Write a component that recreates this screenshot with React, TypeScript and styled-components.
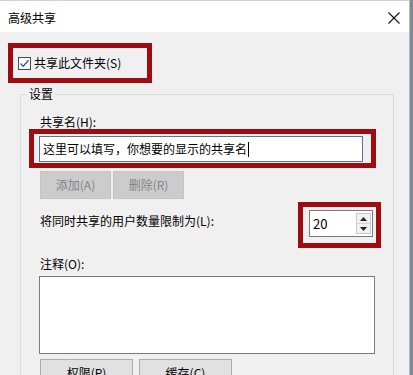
import React from "react";
import styled, { createGlobalStyle } from "styled-components";

const Global = createGlobalStyle`
  html, body { margin: 0; padding: 0; background: #f0f0f0; }
  body { font-family: "Noto Sans CJK SC", "Liberation Sans", sans-serif; font-size: 12px; color: #000; }
  * { box-sizing: border-box; }
`;

const Page = styled.div`
  display: flex;
  width: 413px;
  height: 375px;
  overflow: hidden;
`;

const Dialog = styled.div`
  flex: 1;
  display: flex;
  flex-direction: column;
  background: #f0f0f0;
  border-top: 1px solid #d2d2d2;
  border-right: 1px solid #b8bcc4;
`;

const Strip = styled.div`
  width: 3px;
  background: #808898;
`;

const TitleBar = styled.div`
  flex: none;
  height: 31px;
  background: #fff;
  display: flex;
  align-items: center;
  justify-content: space-between;
  padding: 0 9px 0 8px;
`;

const Title = styled.span`
  font-size: 12px;
  line-height: 14px;
  margin-top: 2px;
`;

const CloseIcon = styled.svg`
  width: 12px;
  height: 12px;
  margin-top: 2px;
`;

const Body = styled.div`
  flex: 1 0 auto;
  display: flex;
  flex-direction: column;
  align-items: flex-start;
  padding: 11px 0 0 8px;
`;

const Highlight = styled.div<{ $pad: string; $ml?: number; $mr?: number }>`
  flex: none;
  display: flex;
  align-items: center;
  border: 5px solid #9c0c10;
  padding: ${(p) => p.$pad};
  margin-left: ${(p) => p.$ml ?? 0}px;
  margin-right: ${(p) => p.$mr ?? 0}px;
`;

const CheckRow = styled.label`
  display: flex;
  align-items: center;
  gap: 3px;
  width: 134px;
  height: 30px;
  padding-left: 5px;
  line-height: 14px;
`;

const CheckBox = styled.span`
  width: 13px;
  height: 13px;
  border: 1px solid #4a4a4a;
  background: #fff;
  display: inline-flex;
  align-items: center;
  justify-content: center;
`;

const Group = styled.div`
  margin: 11px 0 0 12px;
  width: 374px;
  border: 1px solid #dcdcdc;
  border-bottom: none;
  padding: 0 17px 0 19px;
  display: flex;
  flex-direction: column;
  align-items: stretch;
  flex: 1 0 auto;
`;

const GroupLabel = styled.span`
  align-self: flex-start;
  margin: -9px 0 0 -13px;
  padding: 0 2px;
  background: #f0f0f0;
  line-height: 16px;
`;

const FieldLabel = styled.div<{ $mt: number }>`
  flex: none;
  line-height: 14px;
  margin-top: ${(p) => p.$mt}px;
`;

const TextInput = styled.div`
  width: 336px;
  height: 26px;
  border: 1px solid #5f7386;
  background: #fff;
  display: flex;
  align-items: center;
  padding-left: 3px;
  line-height: 14px;
`;

const Caret = styled.span`
  display: inline-block;
  width: 1px;
  height: 15px;
  background: #000;
  margin-left: 1px;
`;

const ButtonRow = styled.div<{ $gap: number; $mt: number }>`
  flex: none;
  display: flex;
  gap: ${(p) => p.$gap}px;
  margin-top: ${(p) => p.$mt}px;
`;

const Button = styled.button<{ $disabled?: boolean; $w: number; $h: number }>`
  flex: none;
  width: ${(p) => p.$w}px;
  height: ${(p) => p.$h}px;
  font-family: inherit;
  font-size: 12px;
  line-height: 14px;
  padding: 0;
  color: ${(p) => (p.$disabled ? "#838383" : "#000")};
  background: ${(p) => (p.$disabled ? "#cccccc" : "#e1e1e1")};
  border: 1px solid ${(p) => (p.$disabled ? "#c4c4c4" : "#adadad")};
`;

const LimitRow = styled.div`
  flex: none;
  display: flex;
  justify-content: space-between;
  align-items: flex-start;
  margin-top: 3px;
`;

const LimitLabel = styled.span`
  line-height: 14px;
  margin-top: 12px;
`;

const Spin = styled.div`
  width: 64px;
  height: 27px;
  border: 1px solid #7a7a7a;
  background: #fff;
  display: flex;
  align-items: center;
  justify-content: space-between;
  padding: 0 1px 0 3px;
`;

const SpinValue = styled.span`
  font-size: 13px;
  line-height: 14px;
`;

const SpinButtons = styled.div`
  width: 15px;
  height: 21px;
  display: flex;
  flex-direction: column;
  border: 1px solid #c9c9c9;
  background: #f2f2f2;
`;

const SpinHalf = styled.div<{ $top?: boolean }>`
  flex: 1;
  display: flex;
  align-items: center;
  justify-content: center;
  border-bottom: ${(p) => (p.$top ? "1px solid #d4d4d4" : "none")};
`;

const TextArea = styled.div`
  flex: none;
  width: 336px;
  height: 78px;
  margin: 5px 0 0 -1px;
  border: 1px solid #7a7a7a;
  background: #fff;
`;

export default function App() {
  return (
    <>
      <Global />
      <Page>
        <Dialog>
          <TitleBar>
            <Title>高级共享</Title>
            <CloseIcon viewBox="0 0 12 12">
              <path d="M0.5 0.5 L11.5 11.5 M11.5 0.5 L0.5 11.5" stroke="#111" strokeWidth="1.1" fill="none" />
            </CloseIcon>
          </TitleBar>
          <Body>
            <Highlight $pad="0">
              <CheckRow>
                <CheckBox>
                  <svg width="11" height="11" viewBox="0 0 11 11">
                    <path d="M1.5 5.5 L4.2 8.3 L9.5 2.2" stroke="#2b5f97" strokeWidth="1.3" fill="none" />
                  </svg>
                </CheckBox>
                共享此文件夹(S)
              </CheckRow>
            </Highlight>
            <Group>
              <GroupLabel>设置</GroupLabel>
              <FieldLabel $mt={13}>共享名(H):</FieldLabel>
              <Highlight $pad="2px 8px 1px 5px" $ml={-11}>
                <TextInput>
                  这里可以填写，你想要的显示的共享名
                  <Caret />
                </TextInput>
              </Highlight>
              <ButtonRow $gap={2} $mt={3}>
                <Button $disabled $w={71} $h={28}>添加(A)</Button>
                <Button $disabled $w={71} $h={28}>删除(R)</Button>
              </ButtonRow>
              <LimitRow>
                <LimitLabel>将同时共享的用户数量限制为(L):</LimitLabel>
                <Highlight $pad="3px 3px 6px 6px" $mr={-5}>
                  <Spin>
                    <SpinValue>20</SpinValue>
                    <SpinButtons>
                      <SpinHalf $top>
                        <svg width="7" height="4" viewBox="0 0 7 4">
                          <path d="M0 4 L3.5 0 L7 4 Z" fill="#222" />
                        </svg>
                      </SpinHalf>
                      <SpinHalf>
                        <svg width="7" height="4" viewBox="0 0 7 4">
                          <path d="M0 0 L3.5 4 L7 0 Z" fill="#222" />
                        </svg>
                      </SpinHalf>
                    </SpinButtons>
                  </Spin>
                </Highlight>
              </LimitRow>
              <FieldLabel $mt={9}>注释(O):</FieldLabel>
              <TextArea />
              <ButtonRow $gap={6} $mt={5}>
                <Button $w={93} $h={28}>权限(P)</Button>
                <Button $w={93} $h={28}>缓存(C)</Button>
              </ButtonRow>
            </Group>
          </Body>
        </Dialog>
        <Strip />
      </Page>
    </>
  );
}
